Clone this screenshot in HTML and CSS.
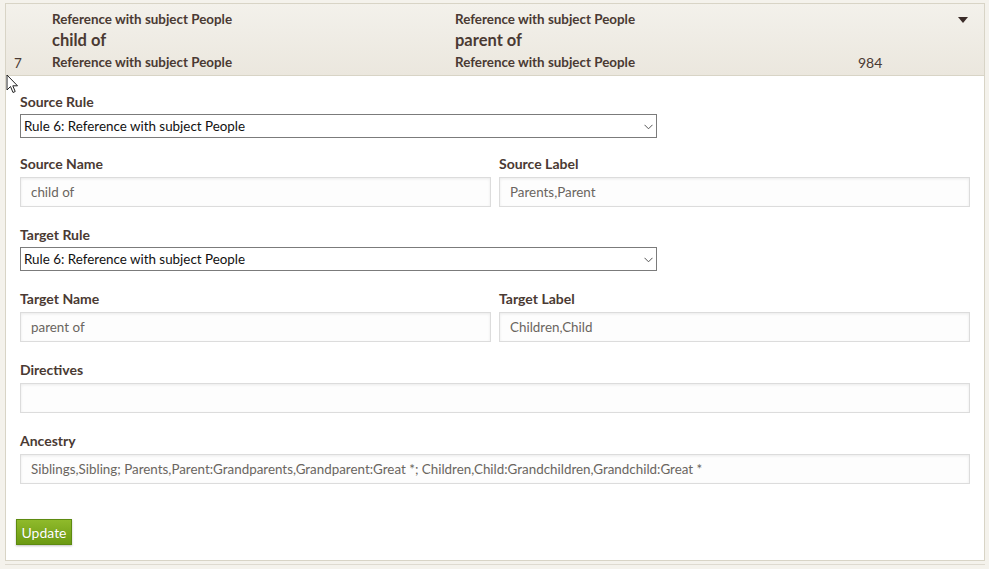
FILE: index.html
```html
<!DOCTYPE html>
<html>
<head>
<meta charset="utf-8">
<link rel="stylesheet" href="styles.css">
</head>
<body>
<div class="panel">
  <div class="head">
    <div class="num">7</div>
    <div class="col">
      <div class="small">Reference with subject People</div>
      <div class="big">child of</div>
      <div class="small">Reference with subject People</div>
    </div>
    <div class="col">
      <div class="small">Reference with subject People</div>
      <div class="big">parent of</div>
      <div class="small">Reference with subject People</div>
    </div>
    <div class="count">984</div>
    <svg class="caret" width="10" height="6" viewBox="0 0 10 6"><path d="M0 0H10L5 6Z" fill="#3a2b28"/></svg>
  </div>
  <div class="body">
    <div class="field first">
      <label class="lbl">Source Rule</label>
      <div class="sel">
        <span>Rule 6: Reference with subject People</span>
        <svg class="chev" width="9" height="6" viewBox="0 0 9 6"><path d="M0.5 0.8L4.5 4.8L8.5 0.8" fill="none" stroke="#555" stroke-width="1"/></svg>
      </div>
    </div>
    <div class="row">
      <div class="field">
        <label class="lbl">Source Name</label>
        <div class="inp">child of</div>
      </div>
      <div class="field">
        <label class="lbl">Source Label</label>
        <div class="inp">Parents,Parent</div>
      </div>
    </div>
    <div class="field">
      <label class="lbl">Target Rule</label>
      <div class="sel">
        <span>Rule 6: Reference with subject People</span>
        <svg class="chev" width="9" height="6" viewBox="0 0 9 6"><path d="M0.5 0.8L4.5 4.8L8.5 0.8" fill="none" stroke="#555" stroke-width="1"/></svg>
      </div>
    </div>
    <div class="row">
      <div class="field">
        <label class="lbl">Target Name</label>
        <div class="inp">parent of</div>
      </div>
      <div class="field">
        <label class="lbl">Target Label</label>
        <div class="inp">Children,Child</div>
      </div>
    </div>
    <div class="field">
      <label class="lbl">Directives</label>
      <div class="inp"></div>
    </div>
    <div class="field">
      <label class="lbl">Ancestry</label>
      <div class="inp">Siblings,Sibling; Parents,Parent:Grandparents,Grandparent:Great *; Children,Child:Grandchildren,Grandchild:Great *</div>
    </div>
    <button class="btn">Update</button>
  </div>
</div>
<div class="next"></div>
<svg class="cursor" width="14" height="20" viewBox="0 0 14 20"><path d="M1 1V16L4.5 12.5L7 18.5L9.2 17.5L6.8 11.8H11.5Z" fill="#fff" stroke="#222" stroke-width="1"/></svg>
</body>
</html>
```
FILE: styles.css
```css
* { box-sizing: border-box; }
html, body { margin: 0; padding: 0; }
body {
  background: #f4f2ec;
  font-family: Lato, "Open Sans", sans-serif;
  color: #4a3a33;
  padding: 3px 4px 0 5px;
  position: relative;
  height: 569px;
  overflow: hidden;
}
.panel {
  border: 1px solid #d8d4c6;
  background: #fff;
  width: 980px;
}
.head {
  height: 72px;
  background: linear-gradient(#f3f1eb, #ebe7de);
  border-bottom: 1px solid #d8d4c6;
  display: flex;
  position: relative;
  padding-top: 7px;
}
.num {
  width: 46px;
  padding-left: 8px;
  padding-top: 44px;
  font-size: 13.5px;
  line-height: 16px;
}
.col {
  width: 403px;
}
.small {
  font-size: 13.4px;
  line-height: 16px;
  font-weight: 700;
  height: 16px;
}
.big {
  font-size: 16.5px;
  font-weight: 700;
  line-height: 20px;
  margin: 3px 0 4px;
}
.count {
  padding-top: 44px;
  font-size: 14px;
  line-height: 16px;
}
.caret {
  position: absolute;
  right: 16px;
  top: 13px;
}
.body {
  padding: 18px 14px 15px 14px;
}
.field {
  display: flex;
  flex-direction: column;
  margin-bottom: 20px;
}
.field.first { margin-bottom: 18px; }
.row {
  display: flex;
  gap: 8px;
}
.row .field { flex: 1; }
.lbl {
  font-size: 14px;
  font-weight: 700;
  line-height: 16px;
  margin-bottom: 4px;
  color: #4a3a33;
}
.sel {
  width: 637px;
  height: 24px;
  border: 1px solid #7b7b7b;
  background: #fff;
  color: #111;
  font-size: 13.4px;
  line-height: 22px;
  padding-left: 3px;
  position: relative;
}
.chev {
  position: absolute;
  right: 3px;
  top: 9px;
}
.inp {
  margin-top: 1px;
  height: 30px;
  border: 1px solid #dcdcdc;
  background: #fdfdfd;
  box-shadow: inset 0 1px 3px rgba(0,0,0,0.08);
  font-size: 13.4px;
  line-height: 28px;
  padding: 0 10px;
  color: #6a6560;
  white-space: nowrap;
  overflow: hidden;
}
.btn {
  display: block;
  margin-top: 35px;
  margin-left: -4px;
  width: 56px;
  height: 26px;
  border: 1px solid #5d8a10;
  background: linear-gradient(#8fba2b, #6b9a12);
  color: #fff;
  font-family: Lato, "Open Sans", sans-serif;
  font-size: 14px;
  padding: 0;
  box-shadow: 0 1px 2px rgba(0,0,0,0.25);
  text-shadow: 0 0 1px rgba(0,0,0,0.2);
}
.next {
  margin-top: 3px;
  border-top: 1px solid #dedad0;
  width: 980px;
  height: 6px;
}
.cursor {
  position: absolute;
  left: 6px;
  top: 74px;
}
```
